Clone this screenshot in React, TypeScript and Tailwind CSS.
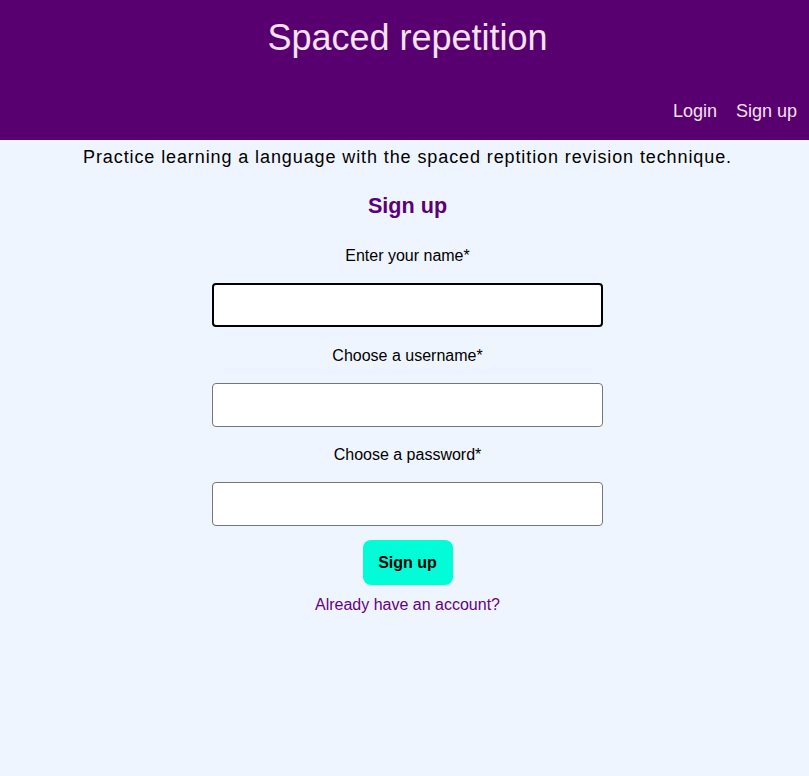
export default function App() {
    return (
        <div className="min-h-[776px] bg-[#eff5fe] font-['Liberation_Sans',Arial,sans-serif] text-black">
            <header className="h-[140px] bg-[#58006f] text-[#f6e2f0] flex flex-col">
                <h1 className="text-[36px] leading-[44px] mt-[16px] pl-[6px] text-center">Spaced repetition</h1>
                <nav className="mt-auto mb-[18px] flex justify-end gap-[19px] pr-[12px] text-[18px] leading-[22px]">
                    <a href="#">Login</a>
                    <a href="#">Sign up</a>
                </nav>
            </header>

            <main className="flex flex-col items-center pl-[6px]">
                <p className="mt-[5px] text-[18px] leading-[24px] tracking-[0.9px] font-['Liberation_Sans_Narrow','Liberation_Sans',sans-serif]">
                    Practice learning a language with the spaced reptition revision technique.
                </p>
                <h2 className="mt-[23px] text-[21.6px] leading-[28px] font-bold text-[#5b0077]">Sign up</h2>

                <form className="flex flex-col items-center">
                    <label className="mt-[26px] text-[16px] leading-[20px]">Enter your name*</label>
                    <input autoFocus className="mt-[17px] w-[391px] h-[44px] bg-white border-2 border-black rounded-[4px] px-3 outline-none" />

                    <label className="mt-[19px] text-[16px] leading-[20px]">Choose a username*</label>
                    <input className="mt-[17px] w-[391px] h-[44px] bg-white border border-[#767676] rounded-[4px] px-3 outline-none" />

                    <label className="mt-[18px] text-[16px] leading-[20px]">Choose a password*</label>
                    <input type="password" className="mt-[17px] w-[391px] h-[44px] bg-white border border-[#767676] rounded-[4px] px-3 outline-none" />

                    <button type="button" className="mt-[14px] w-[90px] h-[45px] rounded-[8px] bg-[#00fdd8] text-[16px] font-bold">
                        Sign up
                    </button>
                    <a href="#" className="mt-[10px] text-[16px] leading-[20px] text-[#650086]">Already have an account?</a>
                </form>
            </main>
        </div>
    );
}
